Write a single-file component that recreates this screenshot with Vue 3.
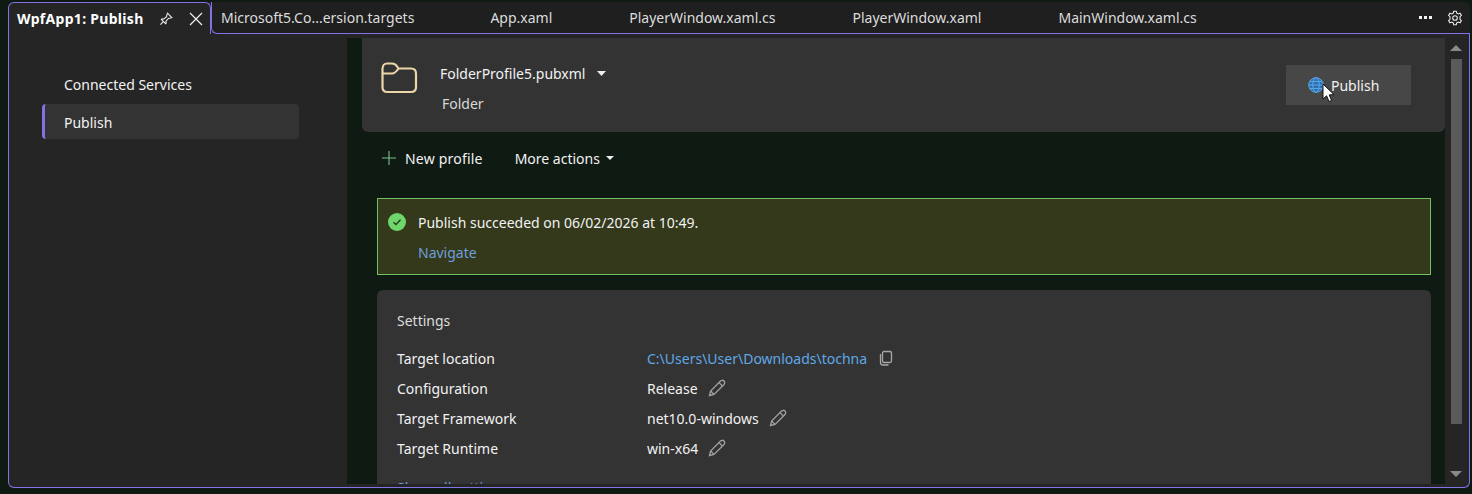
<template>
  <div class="window">
    <div class="tabs">
      <div class="tab active">
        <span class="tab-title">WpfApp1: Publish</span>
        <svg class="pin" width="16" height="16" viewBox="0 0 16 16" fill="none" stroke="#e6e6e6" stroke-width="1.1">
          <path d="M9.5 2.2 L13.8 6.5 L12.7 7 L10.4 7.4 L8 10.2 L8.2 12 L7.6 12.6 L3.4 8.4 L4 7.8 L5.8 8 L8.6 5.6 L9 3.3 Z" />
          <path d="M5.3 10.7 L2.4 13.6" />
        </svg>
        <svg class="close" width="14" height="14" viewBox="0 0 14 14" stroke="#f0f0f0" stroke-width="1.2">
          <path d="M1 1 L13 13 M13 1 L1 13" />
        </svg>
      </div>
      <div v-for="tab in tabs" :key="tab" class="tab">{{ tab }}</div>
      <div class="tab-tools">
        <span class="dots"><i></i><i></i><i></i></span>
        <svg width="16" height="16" viewBox="0 0 16 16" fill="none" stroke="#e8e8e8" stroke-width="1.1">
          <path d="M6.7 1.2 H9.3 L9.7 3.1 L11.3 3.9 L13.1 3.2 L14.4 5.4 L13 6.7 V9.3 L14.4 10.6 L13.1 12.8 L11.3 12.1 L9.7 12.9 L9.3 14.8 H6.7 L6.3 12.9 L4.7 12.1 L2.9 12.8 L1.6 10.6 L3 9.3 V6.7 L1.6 5.4 L2.9 3.2 L4.7 3.9 L6.3 3.1 Z" />
          <circle cx="8" cy="8" r="2.3" />
        </svg>
      </div>
    </div>

    <div class="frame">
      <nav class="side">
        <div class="side-item">Connected Services</div>
        <div class="side-item selected">Publish</div>
      </nav>

      <main class="content">
        <section class="profile">
          <svg class="folder" width="38" height="34" viewBox="0 0 38 34" fill="none" stroke="#ecd6a8" stroke-width="2.2">
            <path d="M2.5 8 C2.5 4.5 4.5 2.5 7 2.5 H12 C14 2.5 16 3.5 17.5 6 L18.5 7.5 H31 C34 7.5 36 9.5 36 12.5 V26 C36 29 34 31 31 31 H7.5 C4.5 31 2.5 29 2.5 26 Z" />
            <path d="M2.5 12.5 H12 C15 12.5 16.5 10.5 18.5 7.5" />
          </svg>
          <div class="profile-text">
            <div class="profile-name">
              FolderProfile5.pubxml
              <svg width="9" height="5" viewBox="0 0 9 5"><path d="M0 0 H9 L4.5 5 Z" fill="#eee" /></svg>
            </div>
            <div class="profile-type">Folder</div>
          </div>
          <button class="publish">
            <svg width="16" height="16" viewBox="0 0 16 16" fill="none" stroke="#58a6ea" stroke-width="1">
              <circle cx="8" cy="8" r="7.3" fill="#2f6fae" />
              <ellipse cx="8" cy="8" rx="3.2" ry="7.3" />
              <path d="M1 8 H15 M2 4.5 H14 M2 11.5 H14" />
            </svg>
            Publish
            <svg class="cursor" width="13" height="20" viewBox="0 0 13 20">
              <path d="M1 1 V16 L4.6 12.8 L7 18.5 L9.6 17.4 L7.2 11.9 L12 11.6 Z" fill="#fff" stroke="#111" stroke-width="1" />
            </svg>
          </button>
        </section>

        <div class="actions">
          <span class="action new">
            <svg width="14" height="14" viewBox="0 0 14 14" stroke="#7fc08a" stroke-width="1.1"><path d="M7 0 V14 M0 7 H14" /></svg>
            New profile
          </span>
          <span class="action more">
            More actions
            <svg width="8" height="4" viewBox="0 0 8 4"><path d="M0 0 H8 L4 4 Z" fill="#eee" /></svg>
          </span>
        </div>

        <section class="banner">
          <div class="banner-line">
            <svg width="20" height="20" viewBox="0 0 20 20">
              <circle cx="10" cy="10" r="9" fill="#6fd66c" />
              <path d="M6.5 10.2 L9 12.5 L13.5 7.8" fill="none" stroke="#24401f" stroke-width="1.5" />
            </svg>
            Publish succeeded on 06/02/2026 at 10:49.
          </div>
          <a class="navigate">Navigate</a>
        </section>

        <section class="settings">
          <h3>Settings</h3>
          <div class="grid">
            <template v-for="row in settings" :key="row.label">
              <div>{{ row.label }}</div>
              <div class="value">
                <span :class="{ link: row.link }">{{ row.value }}</span>
                <svg v-if="row.link" class="copy" width="16" height="16" viewBox="0 0 16 16" fill="none" stroke="#a8a8a8" stroke-width="1.3">
                  <rect x="4.5" y="1.5" width="9" height="11" rx="1.5" />
                  <path d="M2.5 4 V12.5 C2.5 14 3.5 15 5 15 H10.5" />
                </svg>
                <svg v-else class="edit" width="18" height="18" viewBox="0 0 18 18" fill="none" stroke="#a0a0a0" stroke-width="1.3">
                  <path d="M1.5 16.5 L2.6 12 L12.3 2.2 C13.5 1 15 1 16 2 C17 3 17 4.5 15.8 5.7 L6 15.4 Z" />
                  <path d="M11 3.6 L14.4 7 M2.6 12 L6 15.4" />
                </svg>
              </div>
            </template>
          </div>
          <a class="show-all">Show all settings</a>
        </section>
      </main>

      <div class="scrollbar">
        <svg width="12" height="6" viewBox="0 0 12 6"><path d="M6 0 L12 6 H0 Z" fill="#8a8a8a" /></svg>
        <div class="thumb"></div>
        <svg width="12" height="6" viewBox="0 0 12 6"><path d="M0 0 H12 L6 6 Z" fill="#8a8a8a" /></svg>
      </div>
    </div>
  </div>
</template>

<script setup>
const tabs = [
  'Microsoft5.Co...ersion.targets',
  'App.xaml',
  'PlayerWindow.xaml.cs',
  'PlayerWindow.xaml',
  'MainWindow.xaml.cs',
];

const settings = [
  { label: 'Target location', value: 'C:\\Users\\User\\Downloads\\tochna', link: true },
  { label: 'Configuration', value: 'Release' },
  { label: 'Target Framework', value: 'net10.0-windows' },
  { label: 'Target Runtime', value: 'win-x64' },
];
</script>

<style>
html,
body {
  margin: 0;
  background: #0f1a12;
}
</style>

<style scoped>
.window {
  width: 1472px;
  height: 494px;
  box-sizing: border-box;
  padding: 2px 2px 6px 8px;
  display: flex;
  flex-direction: column;
  background: #0f1a12;
  color: #f2f2f2;
  font-family: "Noto Sans", sans-serif;
  font-size: 14px;
  overflow: hidden;
}

/* tab strip */
.tabs {
  height: 32px;
  flex: none;
  display: flex;
  background: #1f1f1f;
  border-radius: 6px 6px 0 0;
}
.tab {
  padding: 0 67px 0 10px;
  display: flex;
  align-items: center;
  color: #dcdcdc;
  border-bottom: 1px solid #8172e6;
  white-space: nowrap;
}
.tab:nth-child(2) {
  border-left: 1px solid #8172e6;
  border-bottom-left-radius: 6px;
  padding-left: 9px;
  padding-right: 66px;
}
.tab.active {
  width: 203px;
  box-sizing: border-box;
  padding: 0 6px 0 8px;
  background: #252525;
  border: 1px solid #8172e6;
  border-bottom: none;
  border-radius: 6px 6px 0 0;
  color: #fff;
}
.tab-title {
  font-weight: 700;
  letter-spacing: 0.3px;
  flex: 1;
}
.pin {
  margin-right: 15px;
}
.close {
  margin-right: 1px;
}
.tab-tools {
  flex: 1;
  display: flex;
  align-items: center;
  justify-content: flex-end;
  gap: 15px;
  padding-right: 7px;
  border-bottom: 1px solid #8172e6;
}
.dots {
  display: flex;
  gap: 2px;
}
.dots i {
  width: 3px;
  height: 3px;
  background: #f0f0f0;
}

/* body */
.frame {
  flex: 1;
  min-height: 0;
  display: flex;
  padding: 4px 0 3px;
  background: #252525;
  border: 1px solid #8172e6;
  border-top: none;
  border-radius: 0 0 6px 6px;
}
.side {
  width: 338px;
  flex: none;
  box-sizing: border-box;
  padding: 29px 48px 0 33px;
}
.side-item {
  height: 35px;
  display: flex;
  align-items: center;
  padding: 0 19px;
  margin-bottom: 2px;
  border-left: 3px solid transparent;
}
.side-item.selected {
  box-sizing: border-box;
  padding-top: 2px;
  background: #333333;
  border-left-color: #8172e6;
  border-radius: 4px;
}

.content {
  flex: 1;
  min-width: 0;
  background: #0f1a12;
  overflow: hidden;
}

.profile {
  height: 94px;
  margin-left: 15px;
  display: flex;
  align-items: center;
  background: #333333;
  border-radius: 0 0 6px 6px;
  padding: 0 34px 0 18px;
}
.folder {
  margin-bottom: 14px;
}
.profile-text {
  flex: 1;
  margin-left: 22px;
  padding-top: 6px;
  display: flex;
  flex-direction: column;
  gap: 11px;
}
.profile-name {
  display: flex;
  align-items: center;
  gap: 12px;
}
.profile-type {
  margin-left: 2px;
  color: #d8d8d8;
}
.publish {
  width: 125px;
  height: 40px;
  display: flex;
  align-items: center;
  gap: 7px;
  padding: 0 0 0 22px;
  position: relative;
  background: #474747;
  border: none;
  color: #f2f2f2;
  font: inherit;
}
.cursor {
  position: absolute;
  left: 36px;
  top: 18px;
}

.actions {
  height: 52px;
  margin-left: 35px;
  display: flex;
  align-items: center;
  gap: 32px;
}
.action {
  display: flex;
  align-items: center;
  gap: 9px;
}
.new {
  letter-spacing: 0.2px;
}
.more {
  gap: 6px;
}

.banner {
  height: 77px;
  box-sizing: border-box;
  margin: 14px 14px 15px 30px;
  padding: 13px 9px 0;
  background: #33391a;
  border: 1px solid #72bf62;
}
.banner-line {
  display: flex;
  align-items: center;
  gap: 11px;
}
.navigate {
  display: block;
  margin: 11px 0 0 31px;
  color: #6f9fdc;
}

.settings {
  margin: 0 14px 0 30px;
  padding: 21px 20px 0;
  height: 230px;
  box-sizing: border-box;
  background: #333333;
  border-radius: 6px;
}
h3 {
  margin: 0 0 13px;
  font: inherit;
  color: #dedede;
}
.grid {
  display: grid;
  grid-template-columns: 250px 1fr;
  grid-auto-rows: 30px;
  align-items: center;
}
.value {
  display: flex;
  align-items: center;
}
.link {
  color: #5fa8e8;
}
.copy {
  margin-left: 11px;
}
.edit {
  margin-left: 10px;
}
.show-all {
  display: block;
  margin-top: 15px;
  color: #6f9fdc;
}

.scrollbar {
  width: 24px;
  flex: none;
  box-sizing: border-box;
  padding: 7px 2px 0 0;
  display: flex;
  flex-direction: column;
  align-items: center;
  gap: 8px;
}
.thumb {
  width: 11px;
  height: 365px;
  flex: none;
  margin-bottom: 39px;
  background: #5a5a5a;
}
</style>
